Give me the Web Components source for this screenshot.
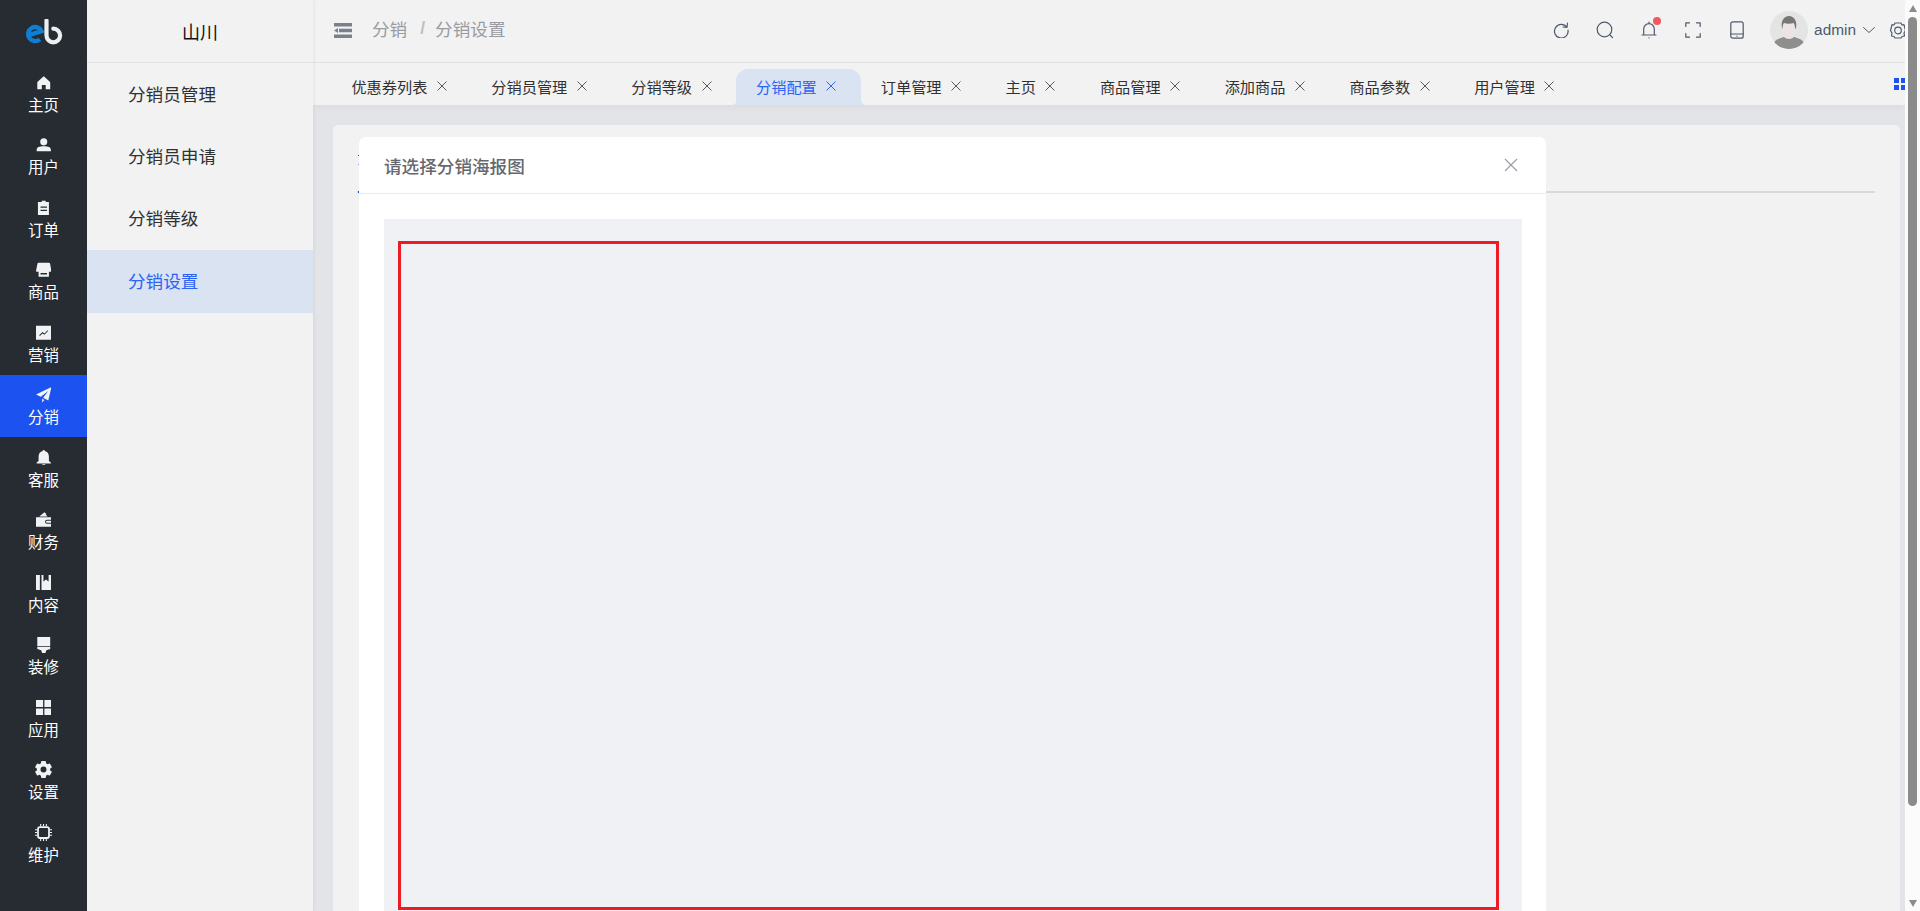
<!DOCTYPE html>
<html lang="zh-CN"><head><meta charset="utf-8"><title>分销设置</title>
<style>
html,body{margin:0;height:100%;overflow:hidden;background:#e2e4e8}
body{font-family:"Noto Sans CJK SC","Liberation Sans",sans-serif}
</style></head>
<body>
<app-shell>
  <nav-rail slot="rail">
    <rail-item icon="home">主页</rail-item>
    <rail-item icon="user">用户</rail-item>
    <rail-item icon="order">订单</rail-item>
    <rail-item icon="shop">商品</rail-item>
    <rail-item icon="chart">营销</rail-item>
    <rail-item icon="plane" active>分销</rail-item>
    <rail-item icon="bell">客服</rail-item>
    <rail-item icon="wallet">财务</rail-item>
    <rail-item icon="book">内容</rail-item>
    <rail-item icon="brush">装修</rail-item>
    <rail-item icon="apps">应用</rail-item>
    <rail-item icon="gear">设置</rail-item>
    <rail-item icon="chip">维护</rail-item>
  </nav-rail>
  <sub-menu slot="menu" title-text="山川">
    <menu-row>分销员管理</menu-row>
    <menu-row>分销员申请</menu-row>
    <menu-row>分销等级</menu-row>
    <menu-row active>分销设置</menu-row>
  </sub-menu>
  <top-bar slot="top"></top-bar>
  <tab-strip slot="tabs">
    <tab-item>优惠券列表</tab-item>
    <tab-item>分销员管理</tab-item>
    <tab-item>分销等级</tab-item>
    <tab-item active>分销配置</tab-item>
    <tab-item>订单管理</tab-item>
    <tab-item>主页</tab-item>
    <tab-item>商品管理</tab-item>
    <tab-item>添加商品</tab-item>
    <tab-item>商品参数</tab-item>
    <tab-item>用户管理</tab-item>
  </tab-strip>
  <work-area slot="work">
    <poster-dialog>请选择分销海报图</poster-dialog>
  </work-area>
  <fake-scrollbar slot="scroll"></fake-scrollbar>
</app-shell>
<script>
const gearLobes=[0,60,120,180,240,300].map(a=>`<rect x="8.5" y="0" width="7" height="6" rx="1.5" fill="currentColor" transform="rotate(${a} 12 12)"/>`).join('');
const RAIL_ICONS={
home:'<path fill="currentColor" d="M12 2.500c.5 0 1 .2 1.400.6l8 7.400c.5.500.6 1.200.6 2V22h-7v-6.500H9V22H2v-9.500c0-.8.100-1.500.6-2l8-7.400c.4-.4.900-.6 1.400-.6z"/>',
user:'<circle cx="12" cy="7.500" r="5.500" fill="currentColor"/><path fill="currentColor" d="M1 22v-1.500C1 16 5 14.500 12 14.500s11 1.500 11 6V22z"/>',
order:'<path fill="currentColor" fill-rule="evenodd" d="M9 1h6v2h5v21H3V3h6zM7 10v2h10v-2zm0 5v2h10v-2z"/>',
shop:'<path fill="currentColor" fill-rule="evenodd" d="M4 1h16c1 0 1.500.6 1.700 1.500L24 14c0 .5-.4 1-1 1h-3v8H4v-8H1c-.6 0-1-.5-1-1L2.300 2.500C2.500 1.600 3 1 4 1zM7 17v2.500h10V17z"/>',
chart:'<path fill="currentColor" fill-rule="evenodd" d="M0 1h24v22H0zM5 16l1 1 4-4 3 2 6-6-1-1-5 5-3-2z"/>',
plane:'<path fill="currentColor" d="M24 0 19 21l-8-4.500L19 6 7.500 15 0 11.500zM9.500 18l3.500 2-3.500 4z"/>',
bell:'<path fill="currentColor" d="M12 0c1 0 1.600.7 1.700 1.700C17.500 2.500 20 5.700 20 10v7l3 2.500V21H1v-1.500L4 17v-7c0-4.300 2.500-7.500 6.300-8.300C10.400.7 11 0 12 0zM9 22h6l-3 2.500z"/>',
wallet:'<path fill="currentColor" fill-rule="evenodd" d="M5 7 13 .5l3 2.500-1 1 3 3zM0 8h24v4h-7a3 3 0 0 0 0 6h7v5H0zM24 13.500v3h-7a1.500 1.500 0 0 1 0-3z"/>',
book:'<path fill="currentColor" d="M0 0h6v24H0zM8.500 0h3v10l4-3 4 3V0h4.500v24H8.500z"/>',
brush:'<path fill="currentColor" d="M2 0h20v14.500H2zM2 15.500h20v3l-6 2-1.500 4.500h-5L8 20.500l-6-2z"/>',
apps:'<path fill="currentColor" d="M0 0h11v11H0zM13 0h11v11H13zM0 13h11v11H0zM13 13h11v11H13z"/>',
gear:gearLobes+'<circle cx="12" cy="12" r="6.800" fill="none" stroke="currentColor" stroke-width="5.200"/>',
chip:'<path fill="currentColor" fill-rule="evenodd" d="M7 3h10a4 4 0 0 1 4 4v10a4 4 0 0 1-4 4H7a4 4 0 0 1-4-4V7a4 4 0 0 1 4-4zm0 2.500A1.500 1.500 0 0 0 5.500 7v10A1.500 1.500 0 0 0 7 18.500h10a1.500 1.500 0 0 0 1.500-1.500V7A1.500 1.500 0 0 0 17 5.500z"/><path stroke="currentColor" stroke-width="1.500" d="M8 0v3M12 0v3M16 0v3M8 21v3M12 21v3M16 21v3M0 8h3M0 12h3M0 16h3M21 8h3M21 12h3M21 16h3"/>'
};
const define=(name,css,html)=>{
  customElements.define(name,class extends HTMLElement{
    constructor(){super();this.attachShadow({mode:'open'});}
    connectedCallback(){this.shadowRoot.innerHTML='<style>'+css+'</style>'+(typeof html==='function'?html(this):html);}
  });
};
define('app-shell',
`:host{display:flex;width:100%;height:911px;overflow:hidden}
 .col{flex:1;min-width:0;display:flex;flex-direction:column;position:relative}`,
`<slot name="rail"></slot><slot name="menu"></slot>
 <div class="col"><slot name="top"></slot><slot name="tabs"></slot><slot name="work"></slot></div>
 <slot name="scroll"></slot>`);

define('nav-rail',
`:host{display:block;width:87px;flex:none;background:#272c33;color:#fff;position:relative;z-index:3}
 .logo{height:62px;display:flex;align-items:flex-start;justify-content:center}
 svg{width:38px;height:26px;margin-top:19px;display:block}`,
`<div class="logo"><svg viewBox="0 0 38 26" fill="none">
   <path d="M3 16.400 L16.500 12.200 A7 7 0 1 0 14.800 20.300" stroke="#0f7fd6" stroke-width="4.400"/>
   <path d="M21.500 1.500V16.500A6.800 6.800 0 1 0 28.300 9.700" stroke="#eceff1" stroke-width="4.200" stroke-linecap="round"/>
 </svg></div><slot></slot>`);

define('rail-item',
`:host{display:flex;flex-direction:column;align-items:center;height:62.5px;box-sizing:border-box;padding-top:12.500px;font-size:15.4px;line-height:20px;color:#fff}
 :host([active]){background:#1b52f0}
 svg{width:15.500px;height:15.500px;display:block;color:#f1f2f3;margin-bottom:3.500px}
 :host([icon=gear]) svg,:host([icon=chip]) svg{width:17px;height:17px;margin-top:-.75px;margin-bottom:2.750px}`,
h=>`<svg viewBox="0 0 24 24">${RAIL_ICONS[h.getAttribute('icon')]||''}</svg><slot></slot>`);

define('sub-menu',
`:host{display:block;width:226px;flex:none;background:#f2f2f2;position:relative;z-index:2;box-shadow:1px 0 4px rgba(0,0,0,.06)}
 .t{border-bottom:1px solid #e1e1e8;display:flex;align-items:center;justify-content:center;font-size:18px;color:#111;padding-bottom:1px;box-sizing:border-box;height:63px}`,
h=>`<div class="t">${h.getAttribute('title-text')}</div><slot></slot>`);

define('menu-row',
`:host{display:flex;align-items:center;height:62.4px;box-sizing:border-box;padding:0 0 2px 41px;font-size:17.6px;color:#303133}
 :host([active]){background:#d9e3f2;color:#2d62f4}`,
`<slot></slot>`);

define('top-bar',
`:host{display:flex;align-items:center;height:63px;box-sizing:border-box;border-bottom:1px solid #e1e1e8;background:#f2f2f2;flex:none;overflow:hidden;padding:0 0 2px 21px}
 .crumb{margin-left:20px;font-size:17.6px;color:#9a9ca3;display:flex;align-items:center;padding-bottom:4px}
 .sep{color:#bcc0c8;margin:0 10px 0 13px;font-size:17.6px;font-family:"Liberation Sans",sans-serif;font-weight:700}
 .right{margin-left:auto;display:flex;align-items:center;margin-right:-1px}
 .slot{width:44px;height:40px;display:flex;align-items:center;justify-content:center;position:relative}
 svg{display:block}
 .i{fill:none;stroke:#4e5a6c;stroke-width:1.200;stroke-linecap:round;stroke-linejoin:round}
 .dot{position:absolute;width:8px;height:8px;border-radius:50%;background:#ee5a5f;left:26px;top:7px}
 .who{font-family:"Liberation Sans",sans-serif;font-size:15.400px;color:#4e5a6c;margin:0 7px 0 6px}
 .ava{margin-left:11px}
 .gear{margin-left:15px}`,
`<svg width="18" height="15" viewBox="0 0 18 15"><path fill="#7b808b" d="M0 0h18v3.500H0zM5 5.700h13v3.500H5zM0 11.500h18V15H0zM0 7.500 4 5v5z"/></svg>
 <div class="crumb"><span>分销</span><span class="sep">/</span><span>分销设置</span></div>
 <div class="right">
  <div class="slot"><svg class="i" width="16" height="16" viewBox="0 0 16 16"><path d="M13.800 5.200A6.800 6.800 0 1 0 15 8M14.500 1.200 14 5.300 10 5"/></svg></div>
  <div class="slot"><svg class="i" width="18" height="18" viewBox="0 0 18 18"><circle cx="8.500" cy="8.500" r="7.300"/><path d="M13.800 13.800 16.500 16.500"/></svg></div>
  <div class="slot"><svg class="i" width="16" height="18" viewBox="0 0 16 18"><path d="M1 14h14M2.700 14V8a5.300 5.300 0 0 1 10.600 0v6M8 2.700V1.200M8 16.800v.2"/></svg><span class="dot"></span></div>
  <div class="slot"><svg class="i" width="16" height="16" viewBox="0 0 16 16"><path d="M.8 4.500V.8h3.700M11.500.8h3.700v3.700M15.200 11.500v3.700h-3.700M4.500 15.200H.8v-3.700"/></svg></div>
  <div class="slot"><svg class="i" width="14" height="18" viewBox="0 0 14 18"><rect x=".8" y=".8" width="12.400" height="16.400" rx="2"/><path d="M.8 13h12.400M7 15v.2"/></svg></div>
  <svg class="ava" width="38" height="38" viewBox="0 0 38 38"><defs><clipPath id="c"><circle cx="19" cy="19" r="19"/></clipPath></defs><g clip-path="url(#c)"><rect width="38" height="38" fill="#e4e4e4"/><path fill="#8e8e8e" d="M3 38c0-7 2-9 8-11l5-2h6l5 2c6 2 8 4 8 11z"/><path fill="#ece4e2" d="M12 12h14v9c0 4-3 7-7 7s-7-3-7-7z"/><path fill="#777" d="M12 17c-1.500-7 2-12 7-12s8.500 5 7 12l-1 1c0-3-.5-5-1.500-6-3 1-7 1-9.500 0-1 1-1.500 3-1.500 6z"/></g></svg>
  <span class="who">admin</span>
  <svg class="i" style="stroke-width:1" width="12" height="6" viewBox="0 0 12 6"><path d="M.5.500 6 5.500 11.500.500"/></svg>
  <svg class="i gear" width="16" height="17" viewBox="0 0 16 17"><path d="M5 1h6l1 2 2-.3L15.500 8.500 14 11l.5 3-2.500.5-1 1.500H5l-1-1.500-2.500-.5L2 11 .5 8.500 2 2.700 4 3z"/><circle cx="8" cy="8.500" r="3.300"/></svg>
 </div>`);

define('tab-strip',
`:host{display:flex;align-items:flex-end;height:42px;flex:none;background:#f2f2f2;padding-left:18.400px;box-shadow:0 2px 6px rgba(0,0,0,.04);position:relative;z-index:1;overflow:hidden}
 .tabs{display:flex;align-items:flex-end}
 .more{margin-left:auto;align-self:flex-start;margin-top:15px;margin-right:-1px;display:grid;grid-template-columns:5px 5px;grid-auto-rows:5px;gap:1.500px 2px}
 .more i{background:#1b52f0;display:block}`,
`<div class="tabs"><slot></slot></div><div class="more"><i></i><i></i><i></i><i></i></div>`);

define('tab-item',
`:host{display:flex;align-items:center;height:36px;box-sizing:border-box;padding:0 23.500px 2px 20px;font-size:15.200px;color:#303133;position:relative;border-radius:12px 12px 0 0;white-space:nowrap}
 svg{display:block;width:12px;height:12px;margin-left:8.500px;stroke:#555a61;stroke-width:1;fill:none}
 :host([active]){background:#d9e3f2;color:#2d62f4}
 :host([active]) svg{stroke:#2d62f4}
 :host([active])::before,:host([active])::after{content:"";position:absolute;bottom:0;width:5px;height:5px}
 :host([active])::before{left:-4px;background:radial-gradient(circle at 0 0,transparent 4.500px,#d9e3f2 5px)}
 :host([active])::after{right:-5px;background:radial-gradient(circle at 100% 0,transparent 4.500px,#d9e3f2 5px)}`,
`<slot></slot><svg viewBox="0 0 12 12"><path d="M1.500 1.500 10.500 10.500M10.500 1.500 1.500 10.500"/></svg>`);

define('work-area',
`:host{display:block;flex:1;min-height:0;position:relative;background:#e2e4e8;padding:20px 5px 0 20px}
 .card{background:#f2f2f2;border-radius:5px 5px 0 0;height:100%;padding:0 25px;box-sizing:border-box}
 .head{height:66px;border-bottom:2px solid #d8d9df;position:relative;margin-left:-1px}
 .head::before{content:"";position:absolute;left:1px;bottom:-2px;width:70px;height:2px;background:#1b52f0}
 .head::after{content:"";position:absolute;left:1px;top:30px;width:1px;height:1px;background:#1b52f0;box-shadow:0 9px 0 #7f9cf0}`,
`<div class="card"><div class="head"></div></div><slot></slot>`);

define('poster-dialog',
`:host{position:absolute;left:46px;top:32px;width:1187px;background:#fff;border-radius:7px 7px 0 0;display:block}
 .h{height:57px;box-sizing:border-box;border-bottom:1px solid #e8eaec;display:flex;align-items:center;padding:0 28px 0 25px;font-size:17.6px;font-weight:500;color:#65686e}
 .h svg{margin-left:auto;display:block;stroke:#999ca3;stroke-width:1.100;fill:none}
 .b{padding:25px 24px 0 25px}
 .in{background:#f0f1f5;padding:22px 23px 1px 14px}
 .red{height:669px;box-sizing:border-box;border:3px solid #ed1c24}`,
`<div class="h"><slot></slot><svg width="14" height="14" viewBox="0 0 14 14"><path d="M1 1 13 13M13 1 1 13"/></svg></div>
 <div class="b"><div class="in"><div class="red"></div></div></div>`);

define('fake-scrollbar',
`:host{display:flex;flex-direction:column;align-items:center;width:15px;flex:none;background:#fbfbfb;box-sizing:border-box;padding:5px 0 4px;position:relative;z-index:4}
 i{display:block;width:0;height:0;border-left:4.500px solid transparent;border-right:4.500px solid transparent}
 .up{border-bottom:7px solid #8b8b8b}
 .dn{border-top:7px solid #8b8b8b;margin-top:auto}
 .th{width:9px;height:789px;margin-top:5px;background:#8b8b8b;border-radius:5px}`,
`<i class="up"></i><div class="th"></div><i class="dn"></i>`);
</script>
</body></html>
